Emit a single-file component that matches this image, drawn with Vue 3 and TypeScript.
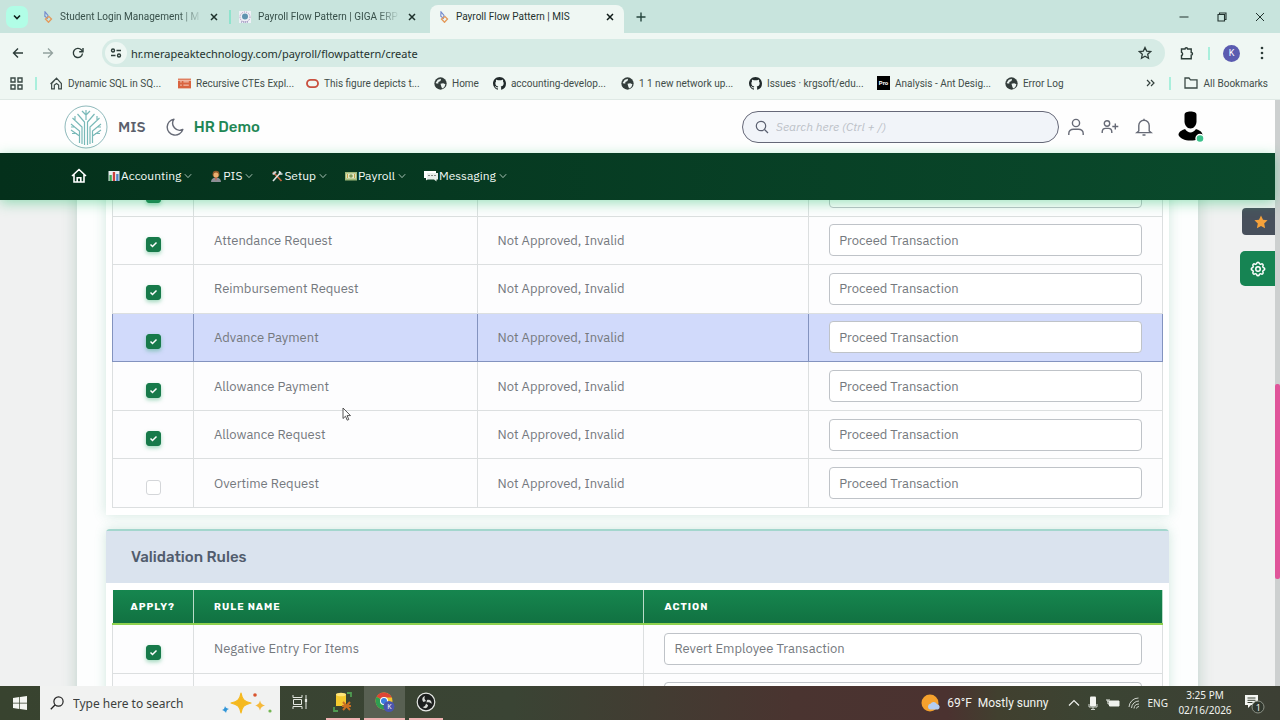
<script setup lang="ts">
import { ref } from 'vue'

interface Bookmark { icon: string; label: string; wide: boolean }
interface RequestRow { name: string; condition: string; apply: boolean; action: string; active?: boolean }
interface RuleRow { name: string; apply: boolean; action: string }

const bookmarks: Bookmark[] = [
  { icon: 'house', label: 'Dynamic SQL in SQ...', wide: true },
  { icon: 'sheet', label: 'Recursive CTEs Expl...', wide: true },
  { icon: 'oval', label: 'This figure depicts t...', wide: true },
  { icon: 'globe', label: 'Home', wide: false },
  { icon: 'github', label: 'accounting-develop...', wide: true },
  { icon: 'globe', label: '1 1 new network up...', wide: true },
  { icon: 'github', label: 'Issues · krgsoft/edu...', wide: true },
  { icon: 'pro', label: 'Analysis - Ant Desig...', wide: true },
  { icon: 'globe', label: 'Error Log', wide: false },
]

const menus = ['Accounting', 'PIS', 'Setup', 'Payroll', 'Messaging']

const requests = ref<RequestRow[]>([
  { name: 'Leave Request', condition: 'Not Approved, Invalid', apply: true, action: 'Proceed Transaction' },
  { name: 'Attendance Request', condition: 'Not Approved, Invalid', apply: true, action: 'Proceed Transaction' },
  { name: 'Reimbursement Request', condition: 'Not Approved, Invalid', apply: true, action: 'Proceed Transaction' },
  { name: 'Advance Payment', condition: 'Not Approved, Invalid', apply: true, action: 'Proceed Transaction', active: true },
  { name: 'Allowance Payment', condition: 'Not Approved, Invalid', apply: true, action: 'Proceed Transaction' },
  { name: 'Allowance Request', condition: 'Not Approved, Invalid', apply: true, action: 'Proceed Transaction' },
  { name: 'Overtime Request', condition: 'Not Approved, Invalid', apply: false, action: 'Proceed Transaction' },
])

const rules = ref<RuleRow[]>([
  { name: 'Negative Entry For Items', apply: true, action: 'Revert Employee Transaction' },
  { name: 'Negative Salary', apply: true, action: 'Revert Employee Transaction' },
])
</script>

<template>
  <div class="screen">
    <div class="tabstrip">
      <button class="tab-search" aria-label="Search tabs">
        <svg width="10" height="10" viewBox="0 0 10 10"><path d="M2 3.5l3 3 3-3" fill="none" stroke="#10201c" stroke-width="1.6" /></svg>
      </button>
      <div class="tab">
        <svg class="fav" viewBox="0 0 12 12"><path d="M4 .8l3 3.500-.6 3-2.600-2z" fill="none" stroke="#7289cf" stroke-width="1.100" /><path d="M4.500 8l3.500-2.500 2.500 2.500-3 3.300z" fill="none" stroke="#e49a5b" stroke-width="1.300" /></svg>
        <span class="tab-title fade">Student Login Management | M</span>
        <button class="tab-close" aria-label="Close tab"><svg width="8" height="8" viewBox="0 0 8 8"><path d="M1 1l6 6M7 1L1 7" stroke="#1d302b" stroke-width="1.5" /></svg></button>
      </div>
      <i class="tab-sep"></i>
      <div class="tab">
        <svg class="fav" viewBox="0 0 12 12"><rect width="12" height="12" fill="#eef0f6" /><circle cx="6" cy="6" r="5" fill="none" stroke="#a98bb8" stroke-dasharray="1 1" /><circle cx="6" cy="5.5" r="3" fill="#5f93b0" /><path d="M2 11h8" stroke="#7d7fb0" stroke-dasharray="1 1" /></svg>
        <span class="tab-title fade">Payroll Flow Pattern | GIGA ERP</span>
        <button class="tab-close" aria-label="Close tab"><svg width="8" height="8" viewBox="0 0 8 8"><path d="M1 1l6 6M7 1L1 7" stroke="#1d302b" stroke-width="1.5" /></svg></button>
      </div>
      <i class="tab-sep clear"></i>
      <div class="tab current">
        <svg class="fav" viewBox="0 0 12 12"><path d="M4 .8l3 3.500-.6 3-2.600-2z" fill="none" stroke="#7289cf" stroke-width="1.100" /><path d="M4.500 8l3.500-2.500 2.500 2.500-3 3.300z" fill="none" stroke="#e49a5b" stroke-width="1.300" /></svg>
        <span class="tab-title">Payroll Flow Pattern | MIS</span>
        <button class="tab-close" aria-label="Close tab"><svg width="8" height="8" viewBox="0 0 8 8"><path d="M1 1l6 6M7 1L1 7" stroke="#101c19" stroke-width="1.5" /></svg></button>
      </div>
      <button class="plain new-tab" aria-label="New tab"><svg width="10" height="10" viewBox="0 0 10 10"><path d="M5 .5v9M.5 5h9" stroke="#24443c" stroke-width="1.4" /></svg></button>
      <div class="win">
        <button class="plain" aria-label="Minimize"><svg width="10" height="10" viewBox="0 0 10 10"><path d="M.5 5h9" stroke="#22332f" /></svg></button>
        <button class="plain" aria-label="Restore"><svg width="10" height="10" viewBox="0 0 10 10"><path d="M1 2.5h6.500V9H1zM2.500 2.500V1H9v6.500H7.500" fill="none" stroke="#22332f" stroke-width="1.1" /></svg></button>
        <button class="plain" aria-label="Close"><svg width="10" height="10" viewBox="0 0 10 10"><path d="M1 1l8 8M9 1L1 9" stroke="#22332f" /></svg></button>
      </div>
    </div>

    <div class="toolbar">
      <button class="plain tool" aria-label="Back"><svg width="12" height="12" viewBox="0 0 12 12"><path d="M11 6H1.500M6 1.500L1.500 6 6 10.500" fill="none" stroke="#2c3c38" stroke-width="1.400" /></svg></button>
      <button class="plain tool" aria-label="Forward"><svg width="12" height="12" viewBox="0 0 12 12"><path d="M1 6h9.500M6 1.500L10.500 6 6 10.500" fill="none" stroke="#93a29e" stroke-width="1.300" /></svg></button>
      <button class="plain tool" aria-label="Reload"><svg width="12" height="12" viewBox="0 0 12 12"><path d="M10.500 6.500A4.600 4.600 0 1 1 9.300 2.800L10.500 4" fill="none" stroke="#2c3c38" stroke-width="1.400" /><path d="M11 1v3.800H7.200" fill="none" stroke="#2c3c38" stroke-width="1.400" /></svg></button>
      <div class="omnibox">
        <button class="site-info" aria-label="Site information"><svg width="12" height="12" viewBox="0 0 12 12"><g fill="none" stroke="#2c3c38" stroke-width="1.400"><circle cx="3" cy="3.500" r="1.500" /><circle cx="9" cy="8.500" r="1.500" /><path d="M6.500 3.500H11M1 8.500h4.500" /></g></svg></button>
        <input class="url" aria-label="Address" value="hr.merapeaktechnology.com/payroll/flowpattern/create" />
        <button class="plain" aria-label="Bookmark"><svg width="14" height="14" viewBox="0 0 14 14"><path d="M7 1.500l1.700 3.600 3.900.5-2.900 2.700.8 3.900L7 10.300l-3.500 1.900.8-3.900L1.400 5.600l3.900-.5z" fill="none" stroke="#2c3c38" stroke-width="1.300" /></svg></button>
      </div>
      <button class="plain ext" aria-label="Extensions"><svg width="14" height="14" viewBox="0 0 14 14"><path d="M1.500 3H5a1.300 1.300 0 0 1 2.600 0h3.600v3.500a1.300 1.300 0 0 1 0 2.600v3.600H1.500V9.500a1.700 1.700 0 0 0 0-3.200z" fill="none" stroke="#2c3c38" stroke-width="1.400" /></svg></button>
      <i class="mint"></i>
      <button class="profile" aria-label="Profile">K</button>
      <button class="plain dots" aria-label="Menu"><svg width="4" height="14" viewBox="0 0 4 14" fill="#2c3c38"><circle cx="2" cy="2" r="1.300" /><circle cx="2" cy="7" r="1.300" /><circle cx="2" cy="12" r="1.300" /></svg></button>
    </div>

    <div class="bookmarks">
      <button class="plain" aria-label="Apps"><svg width="13" height="13" viewBox="0 0 13 13" fill="none" stroke="#3b4a46" stroke-width="1.400"><path d="M1 1h4v4H1zM8 1h4v4H8zM1 8h4v4H1zM8 8h4v4H8z" /></svg></button>
      <i class="mint first"></i>
      <a v-for="b in bookmarks" :key="b.label" href="#" class="bm" :class="{ wide: b.wide }">
        <svg v-if="b.icon === 'house'" class="bi" viewBox="0 0 12 12"><path d="M1.500 11V6L6 1l4.500 5v5H8V7.500L6 6 4 7.500V11zM.5 6.500L6 1" fill="none" stroke="#3d4a47" stroke-width="1.100" /></svg>
        <svg v-else-if="b.icon === 'sheet'" class="bi" viewBox="0 0 12 12"><path d="M0 1.500h12v9H0z" fill="#d9643f" /><path d="M2 4.500h1.500M5 4.500h5M2 7.500h1.500M5 7.500h5M0 3h12" stroke="#fbe3d9" stroke-width=".8" /></svg>
        <svg v-else-if="b.icon === 'oval'" class="bi" viewBox="0 0 12 12"><rect x=".9" y="2.600" width="10.200" height="6.800" rx="3.400" fill="none" stroke="#c9503f" stroke-width="1.700" /></svg>
        <svg v-else-if="b.icon === 'globe'" class="bi" viewBox="0 0 12 12"><circle cx="6" cy="6" r="5.700" fill="#333d3b" /><path d="M1.500 5.500l2-3 3-.8-.5 2-2 .8v1.500H2.500zM6 6.200l2.500-.4 2 1-1 2.600-2 1.300-.8-2z" fill="#eef6f3" /></svg>
        <svg v-else-if="b.icon === 'github'" class="bi" viewBox="0 0 16 16"><path fill="#20292a" d="M8 0C3.580 0 0 3.580 0 8c0 3.540 2.290 6.530 5.470 7.590.4.070.55-.17.55-.38 0-.19-.01-.82-.01-1.490-2.010.37-2.530-.49-2.690-.94-.09-.23-.48-.94-.82-1.130-.28-.15-.68-.52-.01-.53.63-.01 1.080.58 1.230.82.720 1.210 1.870.87 2.330.66.070-.52.280-.87.510-1.070-1.780-.2-3.640-.89-3.640-3.950 0-.87.310-1.590.820-2.150-.08-.2-.36-1.020.08-2.120 0 0 .67-.21 2.200.82.640-.18 1.320-.27 2-.27s1.360.09 2 .27c1.530-1.040 2.200-.82 2.200-.82.440 1.100.16 1.920.08 2.120.51.560.82 1.270.82 2.150 0 3.070-1.870 3.750-3.650 3.950.290.25.540.73.540 1.480 0 1.070-.01 1.930-.01 2.200 0 .21.150.46.550.38A8.010 8.010 0 0 0 16 8c0-4.420-3.580-8-8-8z" /></svg>
        <span v-else class="pro">Pro</span>
        <span>{{ b.label }}</span>
      </a>
      <button class="plain more" aria-label="More bookmarks"><svg width="9" height="8" viewBox="0 0 9 8"><path d="M1 1l3 3-3 3M5 1l3 3-3 3" fill="none" stroke="#33413d" stroke-width="1.200" /></svg></button>
      <i class="mint"></i>
      <a href="#" class="bm all"><svg width="14" height="12" viewBox="0 0 14 12"><path d="M1 1h4l1.500 1.800H13V11H1z" fill="none" stroke="#3b4a46" stroke-width="1.300" /></svg><span>All Bookmarks</span></a>
    </div>

    <div class="viewport">
      <div class="site">
        <header class="topbar">
          <svg class="logo" viewBox="0 0 44 44" fill="none">
            <circle cx="22" cy="22" r="21" stroke="#8eb9bb" />
            <g stroke="#79b9b8" stroke-width="1.200">
              <path d="M20.500 40V17l-7-8M23.500 40V17l7-8M18 39V22L8.500 13M26 39V22l9.500-9M15.500 38V26L7 19M28.500 38V26l8.500-7M22 15V5M22 10l-4-4M22 10l4-4M15.500 31L7 25M28.500 31l8.500-6M11 15.500V11M33 15.500V11M11 22H7M33 22h4M13 28.500H8M31 28.500h5" />
            </g>
          </svg>
          <a href="#" class="brand">MIS</a>
          <button class="plain moon" aria-label="Dark mode"><svg width="18" height="18" viewBox="0 0 18 18"><path d="M8 1.200A8 8 0 1 0 16.800 11.500 7 7 0 0 1 8 1.200z" fill="none" stroke="#666a76" stroke-width="1.400" stroke-linejoin="round" /></svg></button>
          <h1 class="org">HR Demo</h1>
          <label class="search">
            <svg width="14" height="14" viewBox="0 0 14 14"><circle cx="6" cy="6" r="4.700" fill="none" stroke="#5b6070" stroke-width="1.200" /><path d="M9.500 9.500l3.500 3.500" stroke="#5b6070" stroke-width="1.200" /></svg>
            <input type="search" placeholder="Search here (Ctrl + /)" aria-label="Search" />
          </label>
          <div class="actions">
            <button class="plain" aria-label="User"><svg width="18" height="18" viewBox="0 0 18 18" fill="none" stroke="#666a76" stroke-width="1.400"><circle cx="9" cy="5" r="3.600" /><path d="M1.800 17v-1.500c0-2.600 2.100-4.300 4.700-4.300h5c2.600 0 4.700 1.700 4.700 4.300V17" /></svg></button>
            <button class="plain" aria-label="Add user"><svg width="18" height="18" viewBox="0 0 18 18" fill="none" stroke="#666a76" stroke-width="1.400"><circle cx="6" cy="5.500" r="2.700" /><path d="M1.200 15v-1c0-2.200 1.500-3.600 3.400-3.600h2.800c1.900 0 3.400 1.400 3.400 3.600v1M14.300 5.500v6M11.300 8.500h6" /></svg></button>
            <button class="plain" aria-label="Notifications"><svg width="18" height="18" viewBox="0 0 18 18" fill="none" stroke="#666a76" stroke-width="1.400"><path d="M9 .8v1.500M3.800 13V7.500a5.200 5.200 0 0 1 10.400 0V13l2 1.600H1.800zM7.500 17h3" /></svg></button>
          </div>
          <button class="plain avatar" aria-label="Account">
            <svg width="28" height="32" viewBox="0 0 28 32"><path d="M7.500 4c0-2.600 2.500-3.500 6-3.500s6 .9 6 3.500v6.500c0 3.500-2.500 7-6 7s-6-3.500-6-7z" /><path d="M1.500 24c0-3.500 4-5 6.500-6 3 4.500 8 4.500 11 0 2.500 1 6.500 2.500 6.500 6-1.500 3.500-6 5.500-12 5.500S3 27.500 1.500 24z" /><circle cx="23" cy="27.500" r="4" fill="#3cc18c" stroke="#fff" stroke-width="1.400" /></svg>
          </button>
        </header>

        <nav class="menu">
          <a href="#" class="home" aria-label="Home"><svg width="16" height="16" viewBox="0 0 16 16" fill="none" stroke="#fff" stroke-width="1.600"><path d="M1 8l7-6.500L15 8M3 6.500V14h10V6.500M6.200 14v-4.200h3.600V14" /></svg></a>
          <a v-for="m in menus" :key="m" href="#" class="item">
            <svg v-if="m === 'Accounting'" class="mi" viewBox="0 0 12 12"><path d="M.5 1h11v10H.5z" fill="#e9eef0" /><path d="M1.500 5h2.300v6H1.500z" fill="#3aa655" /><path d="M4.800 2h2.300v9H4.800z" fill="#c9403d" /><path d="M8.200 4h2.300v7H8.200z" fill="#4b83c4" /></svg>
            <svg v-else-if="m === 'PIS'" class="mi" viewBox="0 0 12 12"><path d="M1 12c0-3 2-4.500 5-4.500S11 9 11 12z" fill="#8c8f96" /><path d="M5 7h2l-1 4z" fill="#d0553b" /><circle cx="6" cy="4.200" r="3.400" fill="#8e5a2a" /><circle cx="6" cy="4.900" r="2.500" fill="#e8b070" /></svg>
            <svg v-else-if="m === 'Setup'" class="mi" viewBox="0 0 12 12"><path d="M2 2l8.500 9" stroke="#c9653d" stroke-width="1.800" /><path d="M1 4l3-3 1.800 1L3 5z" fill="#cfd4d6" /><path d="M10 2L2 11" stroke="#dfe3e4" stroke-width="1.600" /><path d="M8.500 1v3h3" fill="none" stroke="#dfe3e4" stroke-width="1.300" /></svg>
            <svg v-else-if="m === 'Payroll'" class="mi" viewBox="0 0 12 12"><path d="M0 2h12v8.500H0z" fill="#9fb878" /><path d="M1.200 3.500h9.600v5H1.200z" fill="#e3eac6" /><circle cx="6" cy="6" r="1.800" fill="#7f9a5c" /><path d="M2.500 4v4M9.500 4v4" stroke="#c8a048" /></svg>
            <svg v-else class="mi chat" viewBox="0 0 14 12"><path d="M0 1h12v7H5l-3 2.500V8H0z" fill="#fff" /><path d="M3 3h11v6.500h-1.500v2L10 9.500H3z" fill="#e9efec" /><path d="M4.500 5.500h1M7.500 5.500h1M10.500 5.500h1" stroke="#222" stroke-width="1.200" /></svg>
            <span>{{ m }}</span>
            <svg class="chev" viewBox="0 0 8 8"><path d="M.8 2.200L4 5.600l3.200-3.400" fill="none" stroke="#b9cfc3" stroke-width=".9" /></svg>
          </a>
        </nav>

        <main class="page">
          <div class="sheet">
            <section class="card scrolled">
              <table class="grid requests">
                <colgroup><col class="c-apply" /><col class="c-name" /><col class="c-cond" /><col /></colgroup>
                <tbody>
                  <tr v-for="r in requests" :key="r.name" :class="{ active: r.active }">
                    <td class="tick"><input v-model="r.apply" type="checkbox" :aria-label="'Apply ' + r.name" /></td>
                    <td>{{ r.name }}</td>
                    <td>{{ r.condition }}</td>
                    <td><select v-model="r.action" :aria-label="'Action for ' + r.name"><option>Proceed Transaction</option></select></td>
                  </tr>
                </tbody>
              </table>
            </section>
            <section class="card titled">
              <h2>Validation Rules</h2>
              <table class="grid rules">
                <colgroup><col class="c-apply" /><col class="c-rule" /><col /></colgroup>
                <thead><tr><th class="center">Apply?</th><th>Rule Name</th><th>Action</th></tr></thead>
                <tbody>
                  <tr v-for="r in rules" :key="r.name">
                    <td class="tick"><input v-model="r.apply" type="checkbox" :aria-label="'Apply ' + r.name" /></td>
                    <td>{{ r.name }}</td>
                    <td><select v-model="r.action" :aria-label="'Action for ' + r.name"><option>Revert Employee Transaction</option></select></td>
                  </tr>
                </tbody>
              </table>
            </section>
          </div>
          <div class="side">
            <button class="side-star" aria-label="Favourite"><svg width="14" height="14" viewBox="0 0 14 14"><path d="M7 .5l2 4.300 4.600.5-3.400 3.200.9 4.700L7 10.900l-4.100 2.300.9-4.700L.4 5.300 5 4.800z" fill="#f7a23b" /></svg></button>
            <button class="side-gear" aria-label="Settings"><svg width="18" height="18" viewBox="0 0 24 24" fill="none" stroke="#fff" stroke-width="2"><path d="M10.325 4.317c.426-1.756 2.924-1.756 3.350 0a1.724 1.724 0 0 0 2.573 1.066c1.543-.94 3.310.826 2.370 2.370a1.724 1.724 0 0 0 1.065 2.572c1.756.426 1.756 2.924 0 3.350a1.724 1.724 0 0 0-1.066 2.573c.94 1.543-.826 3.310-2.370 2.370a1.724 1.724 0 0 0-2.572 1.065c-.426 1.756-2.924 1.756-3.350 0a1.724 1.724 0 0 0-2.573-1.066c-1.543.94-3.310-.826-2.370-2.370a1.724 1.724 0 0 0-1.065-2.572c-1.756-.426-1.756-2.924 0-3.350a1.724 1.724 0 0 0 1.066-2.573c-.94-1.543.826-3.310 2.370-2.370 1 .608 2.296.07 2.572-1.065z" /><circle cx="12" cy="12" r="3" /></svg></button>
          </div>
        </main>
      </div>
      <div class="scrollbar"><div class="thumb"></div></div>
    </div>

    <footer class="taskbar">
      <button class="plain start" aria-label="Start"><svg width="14" height="14" viewBox="0 0 14 14" fill="#f4f6f2"><path d="M0 2l6.300-.9v5.600H0zM7 1l7-1v6.700H7zM0 7.400h6.300V13L0 12.100zM7 7.400h7V14l-7-1z" /></svg></button>
      <label class="tsearch">
        <svg width="14" height="14" viewBox="0 0 14 14"><circle cx="8.500" cy="5.500" r="4.600" fill="none" stroke="#222" stroke-width="1.200" /><path d="M5.200 8.800L.8 13.200" stroke="#222" stroke-width="1.300" /></svg>
        <input placeholder="Type here to search" aria-label="Type here to search" />
        <svg width="52" height="24" viewBox="0 0 52 24"><path d="M20 2c1.200 6.500 3 8.300 10 10-7 1.700-8.800 3.500-10 10-1.200-6.500-3-8.300-10-10 7-1.700 8.800-3.500 10-10z" fill="#f5b91f" stroke="#f5b91f" stroke-width="1.200" stroke-linejoin="round" /><path d="M39 9.500c.8 3 1.800 4.200 5 5-3.200.8-4.200 2-5 5-.8-3-1.800-4.200-5-5 3.200-.8 4.200-2 5-5z" fill="#f5b93c" /><path d="M4 15c.5 2 2 2.500 4 3-2 .8-2.500 1.500-3 4-1-2-2-2-4-3 2-.8 2.500-1.500 3-4z" fill="#2f95d8" /><circle cx="34" cy="4" r="1.800" fill="#d9552f" /><circle cx="49" cy="20" r="1.600" fill="#74b652" /></svg>
      </label>
      <button class="plain app idle" aria-label="Task view"><svg width="16" height="14" viewBox="0 0 16 14" fill="none" stroke="#e4e8e1"><path d="M1 0v2.500h9V0M1.500 4.500h8v5h-8zM1 14v-2.500h9V14M14 0v14" /><path d="M14 4v3" stroke-width="2.200" /></svg></button>
      <button class="plain app" aria-label="Database tool"><svg width="20" height="20" viewBox="0 0 20 20"><path d="M3 2h10v12H3z" fill="#f4c92f" /><ellipse cx="8" cy="2.500" rx="5" ry="1.800" fill="#ffe47a" /><path d="M14 1h4v4M1 15v4h4" fill="none" stroke="#4f9c51" stroke-width="1.800" /><path d="M10 10l7 8M17 10l-7 8M9 14h9" stroke="#c96f22" stroke-width="2" /></svg></button>
      <button class="plain app on" aria-label="Chrome"><svg width="20" height="20" viewBox="0 0 20 20"><circle cx="9" cy="9" r="8.500" fill="#f3c32e" /><path d="M9 9L1.600 4.800A8.500 8.500 0 0 1 16.800 5.500H9z" fill="#dd4436" /><path d="M9 9v8.500A8.500 8.500 0 0 1 1.600 4.800z" fill="#2f9e52" /><circle cx="9" cy="9" r="4" fill="#fff" /><circle cx="9" cy="9" r="3" fill="#3b7de0" /><circle cx="14" cy="14.500" r="5.500" fill="#4a56ad" /><text x="12.200" y="17.200" font-size="7" fill="#fff" font-family="Open Sans, sans-serif">K</text></svg></button>
      <button class="plain app" aria-label="OBS"><svg width="20" height="20" viewBox="0 0 20 20"><circle cx="10" cy="10" r="8.800" fill="#1c1f1e" stroke="#e6e8e5" stroke-width="1.200" /><g fill="#d6d9d5"><path d="M9 4c-3 1-3.500 4-1.500 6L10 9c-1.500-1.500-2-3-1-5z" /><path d="M15.500 12c.6-3.200-1.700-5-4.500-4l-.5 2.600c2-.6 3.800-.2 5 1.400z" /><path d="M6.500 15c2.400 2.100 5 1.200 5.600-1.800L10 11.500c-.4 2.100-1.600 3.300-3.500 3.500z" /></g></svg></button>
      <div class="tray">
        <button class="plain weather"><svg width="20" height="18" viewBox="0 0 20 18"><circle cx="9" cy="9" r="8.500" fill="#f5a12d" /><path d="M9 15.500a3 3 0 0 1 .5-5.800 3.600 3.600 0 0 1 6.500.6 2.700 2.700 0 0 1 1 5.200z" fill="#b4cdf2" /></svg><span>69°F&nbsp; Mostly sunny</span></button>
        <svg width="12" height="8" viewBox="0 0 12 8"><path d="M1 6.500l5-5 5 5" fill="none" stroke="#eef0ec" stroke-width="1.200" /></svg>
        <svg width="10" height="14" viewBox="0 0 10 14"><rect x="2" y=".5" width="6" height="10" rx="1" fill="#f2f4f0" /><path d="M1 8v3h8V8M5 11v2.500M3 13.500h4" fill="none" stroke="#cfd4cc" /></svg>
        <svg width="14" height="10" viewBox="0 0 14 10"><path d="M3.500 3H13v5H3.500z" fill="#eef1ec" stroke="#eef1ec" /><path d="M1 1v2h2V1M2 3v3h2" fill="none" stroke="#eef1ec" /></svg>
        <svg width="12" height="12" viewBox="0 0 12 12" fill="none" stroke="#cfd4cc"><path d="M1 10A9.500 9.500 0 0 1 10.500 1M3.500 11A7.500 7.500 0 0 1 11 4M6 11.500A5 5 0 0 1 11 7M8.500 11.500A2.500 2.500 0 0 1 11 9.500" /></svg>
        <span class="lang">ENG</span>
        <time class="clock"><span>3:25 PM</span><span>02/16/2026</span></time>
        <button class="plain notif" aria-label="1 notification"><svg width="22" height="22" viewBox="0 0 22 22"><path d="M2 3h13v10H8l-3 3v-3H2z" fill="#f4f6f2" /><path d="M4.500 6h8M4.500 8.300h8M4.500 10.500h5" stroke="#3b4235" /><circle cx="15" cy="15" r="6" fill="#31382e" stroke="#8b9186" /><text x="12.700" y="18.500" font-size="9" fill="#fff" font-family="Open Sans, sans-serif">1</text></svg></button>
      </div>
    </footer>

    <svg class="cursor" viewBox="0 0 10 15"><path d="M1 1v10.500l2.500-2.300 1.700 4 1.600-.7-1.700-3.900H8.500z" fill="#fff" stroke="#444" stroke-width=".9" /></svg>
  </div>
</template>

<style>
body { margin: 0; }
</style>

<style scoped>
.screen { position: relative; display: flex; flex-direction: column; height: 100vh; overflow: hidden; background: #eff7f3; font-family: Roboto, "Open Sans", sans-serif; color: #2f3d3a; }
.screen *, .screen *::after { box-sizing: border-box; }
button, input, select { font: inherit; color: inherit; }
a { color: inherit; text-decoration: none; }
svg { display: block; flex: none; }
.plain { display: flex; align-items: center; justify-content: center; padding: 0; border: 0; background: none; }

.tabstrip { display: flex; align-items: center; height: 33px; flex: none; padding-left: 6px; background: #c8e4dd; font-size: 10px; }
.tab-search { display: flex; align-items: center; justify-content: center; width: 22px; height: 22px; margin-right: 6px; padding: 0; border: 0; border-radius: 7px; background: #b1fde6; }
.tab { display: flex; align-items: center; width: 194px; height: 28px; padding: 0 10px 0 7px; }
.tab-title { flex: 1; min-width: 0; margin-left: 7px; overflow: hidden; white-space: nowrap; color: #38504a; }
.tab-title.fade { -webkit-mask-image: linear-gradient(90deg, #000 84%, transparent); mask-image: linear-gradient(90deg, #000 84%, transparent); }
.fav { width: 12px; height: 12px; }
.tab-close { display: flex; margin-left: 8px; padding: 0; border: 0; background: none; }
.tab-sep { width: 2px; height: 14px; margin: 0 1px; background: #8fe3cd; }
.tab-sep.clear { background: none; }
.tab.current { height: 28px; align-self: flex-end; padding-bottom: 5px; border-radius: 8px 8px 0 0; background: #eff7f3; }
.tab.current .tab-title { color: #24322e; }
.new-tab { margin-left: 12px; }
.win { display: flex; gap: 28px; margin-left: auto; padding-right: 15px; }

.toolbar { display: flex; align-items: center; height: 40px; flex: none; padding: 0 16px 0 3px; }
.tool { width: 30px; height: 28px; }
.omnibox { display: flex; align-items: center; flex: 1; height: 28px; margin-left: 9px; padding: 0 13px 0 3px; border-radius: 14px; background: #d6ebe5; }
.site-info { display: flex; align-items: center; justify-content: center; width: 22px; height: 22px; padding: 0; border: 0; border-radius: 50%; background: #eef7f3; }
.url { flex: 1; min-width: 0; margin-left: 4px; padding: 0; border: 0; background: none; font-family: "Noto Sans", "Open Sans", sans-serif; font-size: 11px; color: #24322e; outline: none; }
.ext { margin-left: 15px; }
.mint { width: 2px; height: 13px; margin-left: 14px; background: #a9efdc; }
.profile { width: 17px; height: 17px; margin-left: 13px; padding: 0; border: 0; border-radius: 50%; background: #5a5bb0; color: #fff; font-size: 9px; line-height: 17px; }
.dots { margin-left: 20px; }

.bookmarks { display: flex; align-items: center; height: 27px; flex: none; padding: 0 12px 6px 10px; border-bottom: 1px solid #dfe9e5; font-size: 10px; white-space: nowrap; color: #3f4d49; }
.bookmarks .first { margin: 0 13px 0 12px; }
.bm { display: flex; align-items: center; gap: 5px; margin-right: 14px; }
.bm.wide { width: 114px; }
.bi { width: 13px; height: 13px; }
.pro { width: 14px; height: 14px; background: #000; color: #fff; font-size: 6px; font-weight: 700; line-height: 14px; text-align: center; }
.more { margin-left: auto; }
.bm.all { gap: 6px; margin: 0 0 0 13px; }

.viewport { display: flex; flex: 1; min-height: 0; }
.site { display: flex; flex-direction: column; flex: 1; min-width: 0; font-family: "IBM Plex Sans", Inter, "Liberation Sans", sans-serif; }
.topbar { display: flex; align-items: center; height: 53px; flex: none; padding: 0 70px 0 64px; background: #fefefe; color: #5b5f6c; }
.logo { width: 44px; height: 44px; }
.brand { margin-left: 10px; font-size: 15px; font-weight: 600; }
.moon { margin-left: 20px; }
.org { margin: 0 0 0 10px; font-family: Rubik, Roboto, sans-serif; font-size: 15px; font-weight: 500; color: #1f8755; }
.search { display: flex; align-items: center; width: 317px; height: 32px; margin-left: auto; padding: 0 12px; border: 1px solid #666878; border-radius: 16px; background: #f1f4f9; }
.search input { flex: 1; min-width: 0; margin-left: 7px; padding: 0; border: 0; background: none; font-size: 12px; font-style: italic; outline: none; }
.search input::placeholder { color: #bcc1c8; }
.actions { display: flex; gap: 16px; margin: 0 24px 0 8px; }

.menu { position: relative; z-index: 2; display: flex; align-items: center; height: 47px; flex: none; padding: 0 71px 2px; background: linear-gradient(90deg, #04301b, #0a4a2c); box-shadow: 0 3px 12px rgba(40, 190, 110, 0.45); color: #f3faf6; font-size: 12px; }
.home { margin-right: 21px; }
.item { display: flex; align-items: center; margin-right: 18px; }
.mi { width: 12px; height: 12px; margin-right: 1px; }
.mi.chat { width: 14px; }
.chev { width: 8px; height: 8px; margin-left: 3px; }

.page { position: relative; flex: 1; min-height: 0; overflow: hidden; background: #f0f1f1; }
.sheet { min-height: 100%; margin: 0 77px; padding: 0 29px; background: #fdfefe; box-shadow: 0 0 14px rgba(40, 110, 85, 0.25); }
.card { padding: 0 6px 7px; background: #fff; box-shadow: 0 0 12px rgba(50, 150, 110, 0.22); }
.scrolled { margin-top: -33px; }
.titled { margin-top: 14px; padding-bottom: 20px; border-top: 2px solid #a3d6cd; border-radius: 4px; }
h2 { margin: 0 -6px 7px; padding: 0 25px; background: #dae3ee; color: #515c6d; font-family: Rubik, Roboto, sans-serif; font-size: 15px; font-weight: 500; line-height: 52px; }
.grid { width: 100%; border-collapse: collapse; table-layout: fixed; font-size: 13px; color: #75797e; background: #fdfdfe; }
.requests { height: 341px; }
.c-apply { width: 81px; }
.c-name { width: 27%; }
.c-cond { width: 31.6%; }
.c-rule { width: 42.9%; }
.grid td { padding: 7px 20px; border: 1px solid #dcdfe0; }
.grid .tick { padding: 8px 0 0; text-align: center; }
.grid .active td { background: #d1dafb; border-color: #8393bf; }
.grid select { display: block; width: 100%; height: 32px; padding: 0 9px; border: 1px solid #bfc3c8; border-radius: 4px; appearance: none; background: #fff; outline: none; }
.tick input { display: block; width: 15px; height: 15px; margin: 0 auto; border: 1px solid #d4d6d9; border-radius: 3px; appearance: none; background: #fff; }
.tick input:checked { border-color: #177a4a; background: #177a4a url("data:image/svg+xml,%3Csvg xmlns='http://www.w3.org/2000/svg' viewBox='0 0 13 13'%3E%3Cpath d='M3.500 6.500l2 2 4-4' fill='none' stroke='%23fff' stroke-width='1.500'/%3E%3C/svg%3E") center / 13px no-repeat; box-shadow: 0 2px 4px rgba(23, 160, 90, 0.4); }
.rules thead { background: linear-gradient(#16864f, #117141); }
.rules th { height: 34px; padding: 0 20px; border: solid #b9dcc8; border-width: 0 1px 2px 0; border-bottom-color: #8fd14f; color: #fff; font-family: Rubik, "Work Sans", Roboto, sans-serif; font-size: 10px; font-weight: 700; letter-spacing: 1px; text-align: left; text-transform: uppercase; }
.rules th.center { padding: 0; text-align: center; }
.rules td { height: 49px; }

.side { position: absolute; top: 8px; right: 0; display: flex; flex-direction: column; align-items: flex-end; gap: 16px; }
.side button { display: flex; align-items: center; padding: 0; border: 0; }
.side .side-star { width: 33px; height: 27px; justify-content: center; padding-left: 4px; border-radius: 4px 0 0 4px; background: #48505c; }
.side-gear { width: 35px; height: 35px; justify-content: center; border-radius: 5px 0 0 5px; background: #168453; }
.scrollbar { width: 5px; flex: none; display: flex; flex-direction: column; background: #cdd0d0; }
.scrollbar::before { content: ""; flex: 284; }
.scrollbar::after { content: ""; flex: 107; }
.thumb { flex: 196; border-radius: 2px; background: #e0559a; }

.taskbar { display: flex; align-items: center; height: 34px; flex: none; font-family: "Noto Sans", "Open Sans", sans-serif; background: linear-gradient(90deg, #38432f 0%, #3a4434 40%, #4a3430 62%, #4b3230 74%, #41402f 78%, #3b4433 86%, #3c3f34 100%); color: #f2f4f0; }
.start { width: 40px; height: 34px; }
.tsearch { display: flex; align-items: center; width: 240px; height: 34px; padding: 0 7px 0 10px; background: #f1f2f1; }
.tsearch input { flex: 1; min-width: 0; margin-left: 9px; padding: 0; border: 0; background: none; font-size: 12px; outline: none; }
.tsearch input::placeholder { color: #3c3f3d; }
.app { width: 34px; height: 34px; margin-right: 4px; border-bottom: 2px solid #efb3b3; }
.app.idle { width: 40px; margin-right: 6px; border-color: transparent; }
.app.on { width: 41px; background: #586052; }
.tray { display: flex; align-items: center; gap: 8px; margin-left: auto; padding-right: 15px; font-size: 10px; }
.weather { gap: 6px; margin-right: 11px; font-family: Roboto, sans-serif; font-size: 12px; }
.clock { display: flex; flex-direction: column; width: 54px; align-items: center; margin-left: 2px; line-height: 15px; white-space: nowrap; }
.notif { margin-left: 3px; }

.cursor { position: absolute; z-index: 3; left: 342px; top: 407px; width: 10px; height: 15px; }
</style>
